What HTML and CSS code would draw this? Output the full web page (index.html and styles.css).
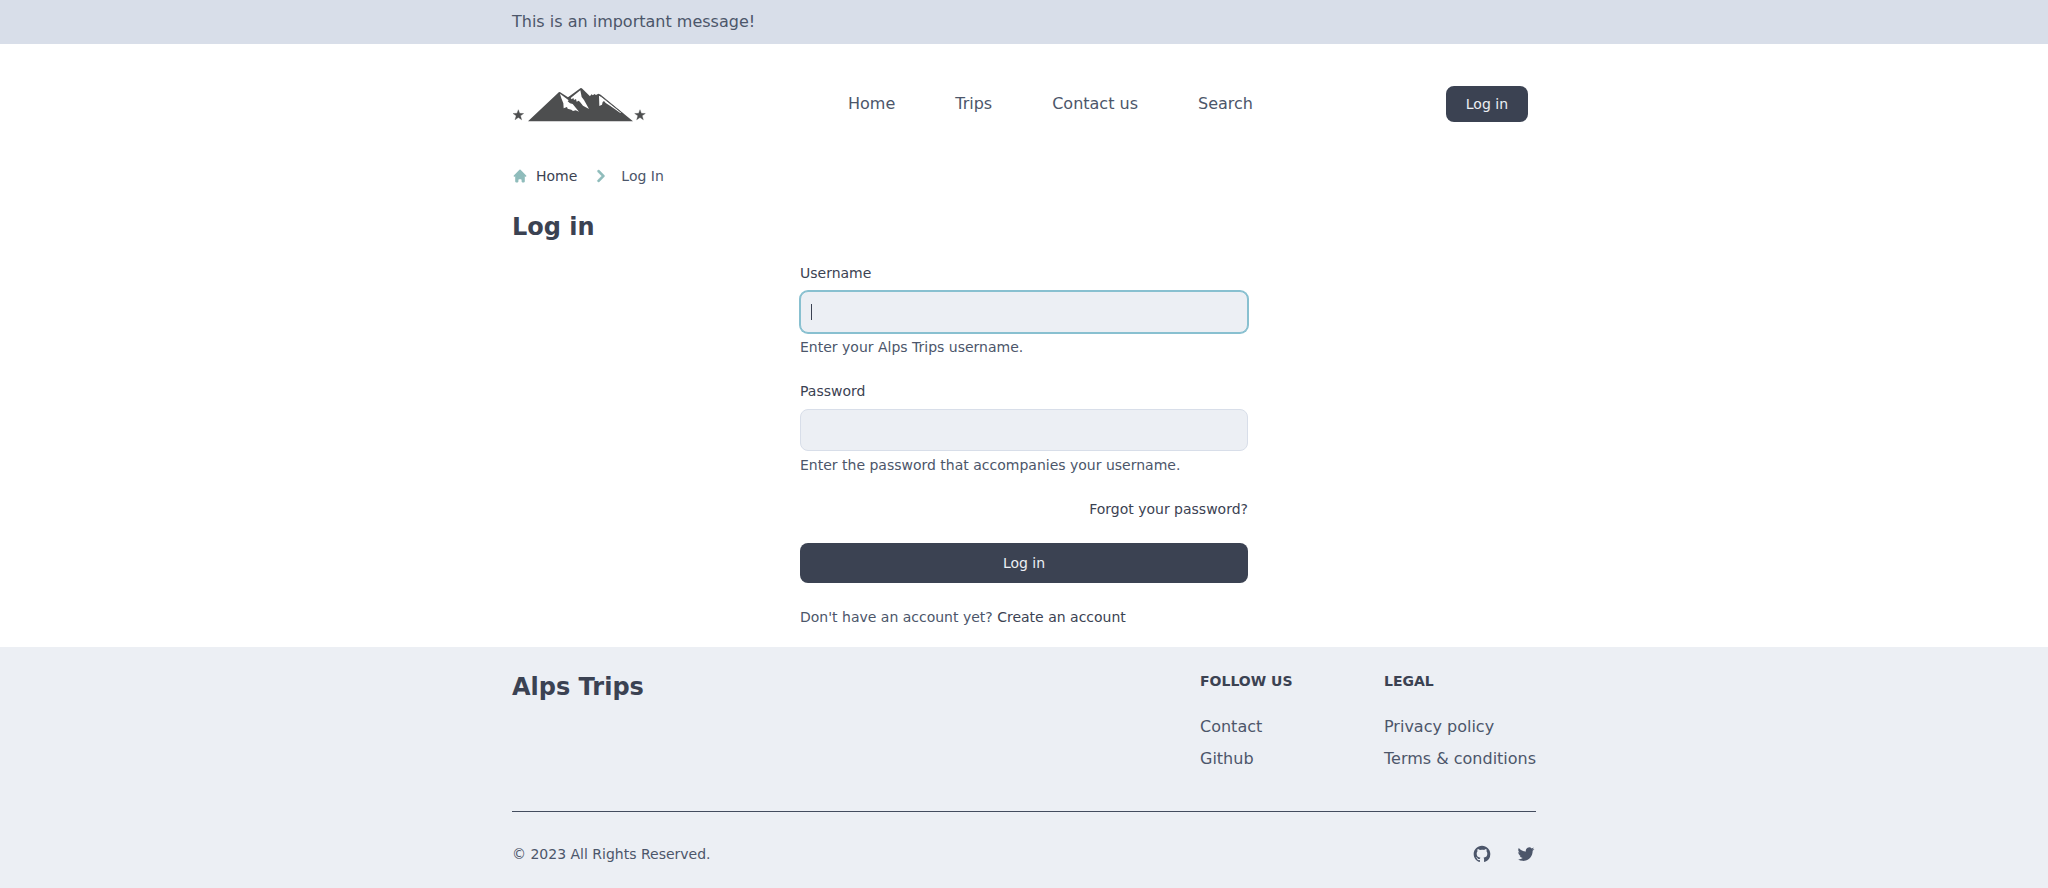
FILE: index.html
```html
<!DOCTYPE html>
<html lang="en">
<head>
<meta charset="utf-8">
<title>Log in - Alps Trips</title>
<link rel="stylesheet" href="styles.css">
</head>
<body>
<div class="banner"><div class="container">This is an important message!</div></div>
<header class="container header">
  <a class="logo" href="#" aria-label="Alps Trips">
    <svg viewBox="36 249 405 120" width="135" height="40">
      <path fill="#4d4e4f" d="M84 363.500L174 279Q178 274 183 278L204 292L239 266Q243 262 247 266L270 289L274 283L279 286L283 282L288 285L295 281L302 284L399 363.500Z"/>
      <path fill="#fff" d="M180 281L190 289L206 301L203 304L210 310L218 312L237 335L227 331L219 333L214 329L203 326L201 321L191 325L190 310L184 295Z"/>
      <path fill="#fff" d="M212 294L241 271L245 291L252 300L267 327L249 317L240 306L236 302L230 305L228 297L222 300L220 294L215 298Z"/>
      <path fill="#fff" d="M297 287L306 291L364 338L361 339L330 317L317 309L312 303L308 306L306 314L298 318Z"/>
      <path stroke="#4d4e4f" stroke-width="2.500" d="M298 285L370 342"/>
      <path fill="#4d4e4f" stroke="#4d4e4f" d="M55 329l4 11 12 .5-9.500 7 3.500 12-10-7-10 7 3.500-12-9.500-7 12-.5zM420 329l4 11 12 .5-9.500 7 3.500 12-10-7-10 7 3.500-12-9.500-7 12-.5z"/>
    </svg>
  </a>
  <nav class="nav"><a href="#">Home</a><a href="#">Trips</a><a href="#">Contact us</a><a href="#">Search</a></nav>
  <a class="button button-small" href="#">Log in</a>
</header>
<main class="container">
  <nav class="breadcrumb" aria-label="Breadcrumb">
    <a href="#"><svg class="home" viewBox="0 0 20 20" width="16" height="16" fill="currentColor"><path d="M10.707 2.293a1 1 0 00-1.414 0l-7 7a1 1 0 001.414 1.414L4 10.414V17a1 1 0 001 1h2a1 1 0 001-1v-2a1 1 0 011-1h2a1 1 0 011 1v2a1 1 0 001 1h2a1 1 0 001-1v-6.586l.293.293a1 1 0 001.414-1.414l-7-7z"/></svg>Home</a>
    <svg class="chevron" viewBox="0 0 20 20" width="24" height="24" fill="currentColor"><path stroke="currentColor" stroke-width=".3" fill-rule="evenodd" d="M7.293 14.707a1 1 0 010-1.414L10.586 10 7.293 6.707a1 1 0 011.414-1.414l4 4a1 1 0 010 1.414l-4 4a1 1 0 01-1.414 0z"/></svg>
    <span>Log In</span>
  </nav>
  <h1 class="title">Log in</h1>
  <form class="form">
    <div class="field">
      <label for="username">Username</label>
      <div class="input focused" id="username" role="textbox"><span class="caret"></span></div>
      <p class="help">Enter your Alps Trips username.</p>
    </div>
    <div class="field">
      <label for="password">Password</label>
      <input class="input" id="password" type="password">
      <p class="help">Enter the password that accompanies your username.</p>
    </div>
    <a class="link forgot" href="#">Forgot your password?</a>
    <button class="button" type="button">Log in</button>
    <p class="signup">Don't have an account yet? <a class="link" href="#">Create an account</a></p>
  </form>
</main>
<footer class="footer">
  <div class="container">
    <div class="footer-top">
      <div class="brand">Alps Trips</div>
      <div class="columns">
        <div><h2>Follow us</h2><ul><li><a href="#">Contact</a></li><li><a href="#">Github</a></li></ul></div>
        <div><h2>Legal</h2><ul><li><a href="#">Privacy policy</a></li><li><a href="#">Terms &amp; conditions</a></li></ul></div>
      </div>
    </div>
    <div class="footer-bottom">
      <span>© 2023 All Rights Reserved.</span>
      <div class="social">
        <a href="#" aria-label="GitHub"><svg viewBox="0 0 24 24" width="20" height="20" fill="currentColor"><path fill-rule="evenodd" d="M12 2C6.477 2 2 6.484 2 12.017c0 4.425 2.865 8.180 6.839 9.504.5.092.682-.217.682-.483 0-.237-.008-.868-.013-1.703-2.782.605-3.369-1.343-3.369-1.343-.454-1.158-1.110-1.466-1.110-1.466-.908-.620.069-.608.069-.608 1.003.070 1.531 1.032 1.531 1.032.892 1.530 2.341 1.088 2.910.832.092-.647.350-1.088.636-1.338-2.220-.253-4.555-1.113-4.555-4.951 0-1.093.390-1.988 1.029-2.688-.103-.253-.446-1.272.098-2.650 0 0 .840-.270 2.750 1.026A9.564 9.564 0 0112 6.844c.850.004 1.705.115 2.504.337 1.909-1.296 2.747-1.027 2.747-1.027.546 1.379.202 2.398.100 2.651.640.700 1.028 1.595 1.028 2.688 0 3.848-2.339 4.695-4.566 4.943.359.309.678.920.678 1.855 0 1.338-.012 2.419-.012 2.747 0 .268.180.580.688.482A10.019 10.019 0 0022 12.017C22 6.484 17.522 2 12 2z"/></svg></a>
        <a href="#" aria-label="Twitter"><svg viewBox="0 0 24 24" width="20" height="20" fill="currentColor"><path d="M8.290 20.251c7.547 0 11.675-6.253 11.675-11.675 0-.178 0-.355-.012-.530A8.348 8.348 0 0022 5.920a8.190 8.190 0 01-2.357.646 4.118 4.118 0 001.804-2.270 8.224 8.224 0 01-2.605.996 4.107 4.107 0 00-6.993 3.743 11.650 11.650 0 01-8.457-4.287 4.106 4.106 0 001.270 5.477A4.072 4.072 0 012.800 9.713v.052a4.105 4.105 0 003.292 4.022 4.095 4.095 0 01-1.853.070 4.108 4.108 0 003.834 2.850A8.233 8.233 0 012 18.407a11.616 11.616 0 006.290 1.840"/></svg></a>
      </div>
    </div>
  </div>
</footer>
</body>
</html>
```
FILE: styles.css
```css
*, *::before, *::after { box-sizing: border-box; }
body, h1, h2, p, ul { margin: 0; padding: 0; }
body { background: #fff; color: #4c566a; font: 16px/24px "DejaVu Sans", sans-serif; }
a { color: inherit; text-decoration: none; }
ul { list-style: none; }
svg { display: block; }
.container { width: 1024px; margin: 0 auto; }
.banner { background: #d8dee9; padding: 10px 0; height: 44px; line-height: 24px; }
.header { height: 118px; padding: 2px 8px 0 0; display: grid; grid-template-columns: 336px 1fr auto; align-items: center; }
.logo { margin-bottom: 2px; }
.nav { display: flex; gap: 60px; }
.button { display: block; border: 0; border-radius: 8px; background: #3b4252; color: #eceff4; font: 14px/20px "DejaVu Sans", sans-serif; padding: 10px 20px; text-align: center; }
.button-small { padding: 8px 20px; }
.breadcrumb { display: flex; align-items: center; height: 28px; font-size: 14px; line-height: 20px; }
.breadcrumb a { display: flex; align-items: center; gap: 8px; color: #3b4252; }
.home, .chevron { color: #8fbcbb; }
.chevron { margin: 0 8px 0 12px; }
.title { margin-top: 21px; font-size: 24px; line-height: 32px; color: #3b4252; }
.form { width: 448px; margin: 20px auto 0; padding-bottom: 20px; display: flex; flex-direction: column; gap: 24px; font-size: 14px; line-height: 20px; }
.field { display: flex; flex-direction: column; }
.field label { margin-bottom: 8px; color: #3b4252; }
.input { height: 42px; width: 100%; display: flex; align-items: center; border: 1px solid #d8dee9; border-radius: 8px; background: #eceff4; padding: 10px; }
.focused { border-color: #88c0d0; box-shadow: 0 0 0 1px #88c0d0; }
.caret { width: 1px; height: 16px; background: #3b4252; }
.help { margin-top: 4px; }
.link { color: #3b4252; }
.forgot { align-self: flex-end; }
.footer { height: 241px; background: #eceff4; padding-top: 24px; }
.footer-top { display: flex; justify-content: space-between; padding-bottom: 40px; }
.brand { font-size: 24px; line-height: 32px; font-weight: bold; color: #3b4252; }
.columns { display: grid; grid-template-columns: 152px 152px; gap: 32px; }
.columns h2 { margin-bottom: 24px; font-size: 14px; line-height: 20px; text-transform: uppercase; color: #3b4252; }
.columns ul { display: flex; flex-direction: column; gap: 8px; white-space: nowrap; }
.footer-bottom { display: flex; align-items: center; justify-content: space-between; border-top: 1px solid #434c5e; padding-top: 32px; font-size: 14px; line-height: 20px; }
.social { display: flex; gap: 24px; }
```
